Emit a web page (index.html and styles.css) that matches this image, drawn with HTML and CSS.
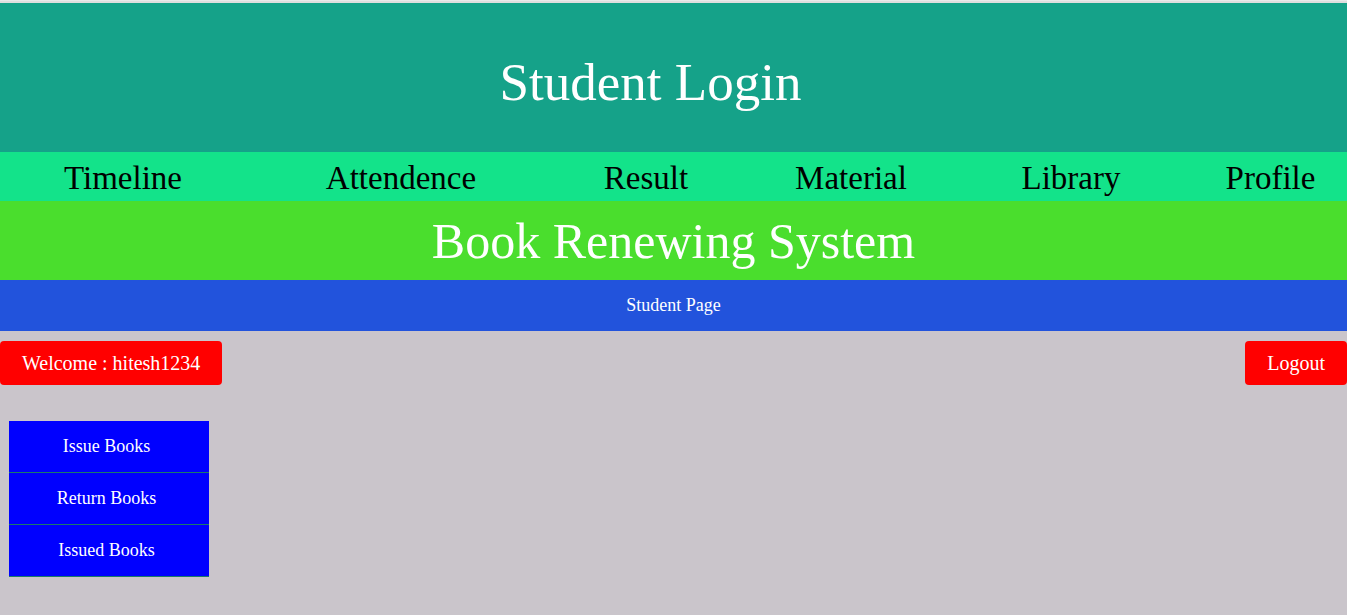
FILE: index.html
```html
<!DOCTYPE html>
<html>
<head>
<meta charset="utf-8">
<link rel="stylesheet" href="styles.css">
</head>
<body>
<div class="topline"></div>
<header class="header"><h1 class="title">Student Login</h1></header>
<nav class="nav">
  <a class="nav-item">Timeline</a>
  <a class="nav-item">Attendence</a>
  <a class="nav-item">Result</a>
  <a class="nav-item">Material</a>
  <a class="nav-item">Library</a>
  <a class="nav-item">Profile</a>
</nav>
<div class="banner">Book Renewing System</div>
<div class="subbar">Student Page</div>
<div class="userbar">
  <button class="btn">Welcome : hitesh1234</button>
  <button class="btn btn-logout">Logout</button>
</div>
<ul class="menu">
  <li class="menu-item">Issue Books</li>
  <li class="menu-item">Return Books</li>
  <li class="menu-item">Issued Books</li>
</ul>
</body>
</html>
```
FILE: styles.css
```css
html, body {
  margin: 0;
  padding: 0;
}
body {
  background: #cac5cb;
  font-family: "Liberation Serif", "Times New Roman", serif;
  height: 615px;
  overflow: hidden;
}
.topline {
  height: 3px;
  background: #dedede;
  border-top: 1px solid #e9e9e9;
  box-sizing: border-box;
}
.header {
  background: #15a289;
  height: 149px;
  display: flex;
  align-items: center;
  justify-content: center;
}
.title {
  margin: 8px 0 0 0;
  font-weight: normal;
  font-size: 53px;
  color: #fff;
  transform: translateX(-23px);
}
.nav {
  background: #13e38a;
  height: 49px;
  display: grid;
  grid-template-columns: 246px 310px 180px 230px 210px 1fr;
  align-items: center;
}
.nav-item {
  text-align: center;
  font-size: 33px;
  color: #000;
  line-height: 49px;
  padding-top: 2px;
}
.nav-item:last-child {
  padding-left: 18px;
}
.banner {
  background: #4ade2d;
  height: 79px;
  display: flex;
  align-items: center;
  justify-content: center;
  color: #fff;
  font-size: 50px;
  box-sizing: border-box;
}
.subbar {
  background: #2253dc;
  height: 51px;
  display: flex;
  align-items: center;
  justify-content: center;
  color: #fff;
  font-size: 18px;
}
.userbar {
  display: flex;
  justify-content: space-between;
  margin-top: 10px;
}
.btn {
  background: #ff0000;
  color: #fff;
  border: none;
  border-radius: 4px;
  height: 44px;
  padding: 0 22px;
  font-family: "Liberation Serif", "Times New Roman", serif;
  font-size: 20px;
}
.btn-logout {
  padding: 0 22px;
}
.menu {
  list-style: none;
  margin: 36px 0 0 9px;
  padding: 0;
  width: 200px;
}
.menu-item {
  background: #0000ff;
  color: #fff;
  height: 51px;
  border-bottom: 1px solid #1a7a6a;
  display: flex;
  align-items: center;
  justify-content: center;
  font-size: 18px;
  padding-right: 5px;
  box-sizing: content-box;
}
```
